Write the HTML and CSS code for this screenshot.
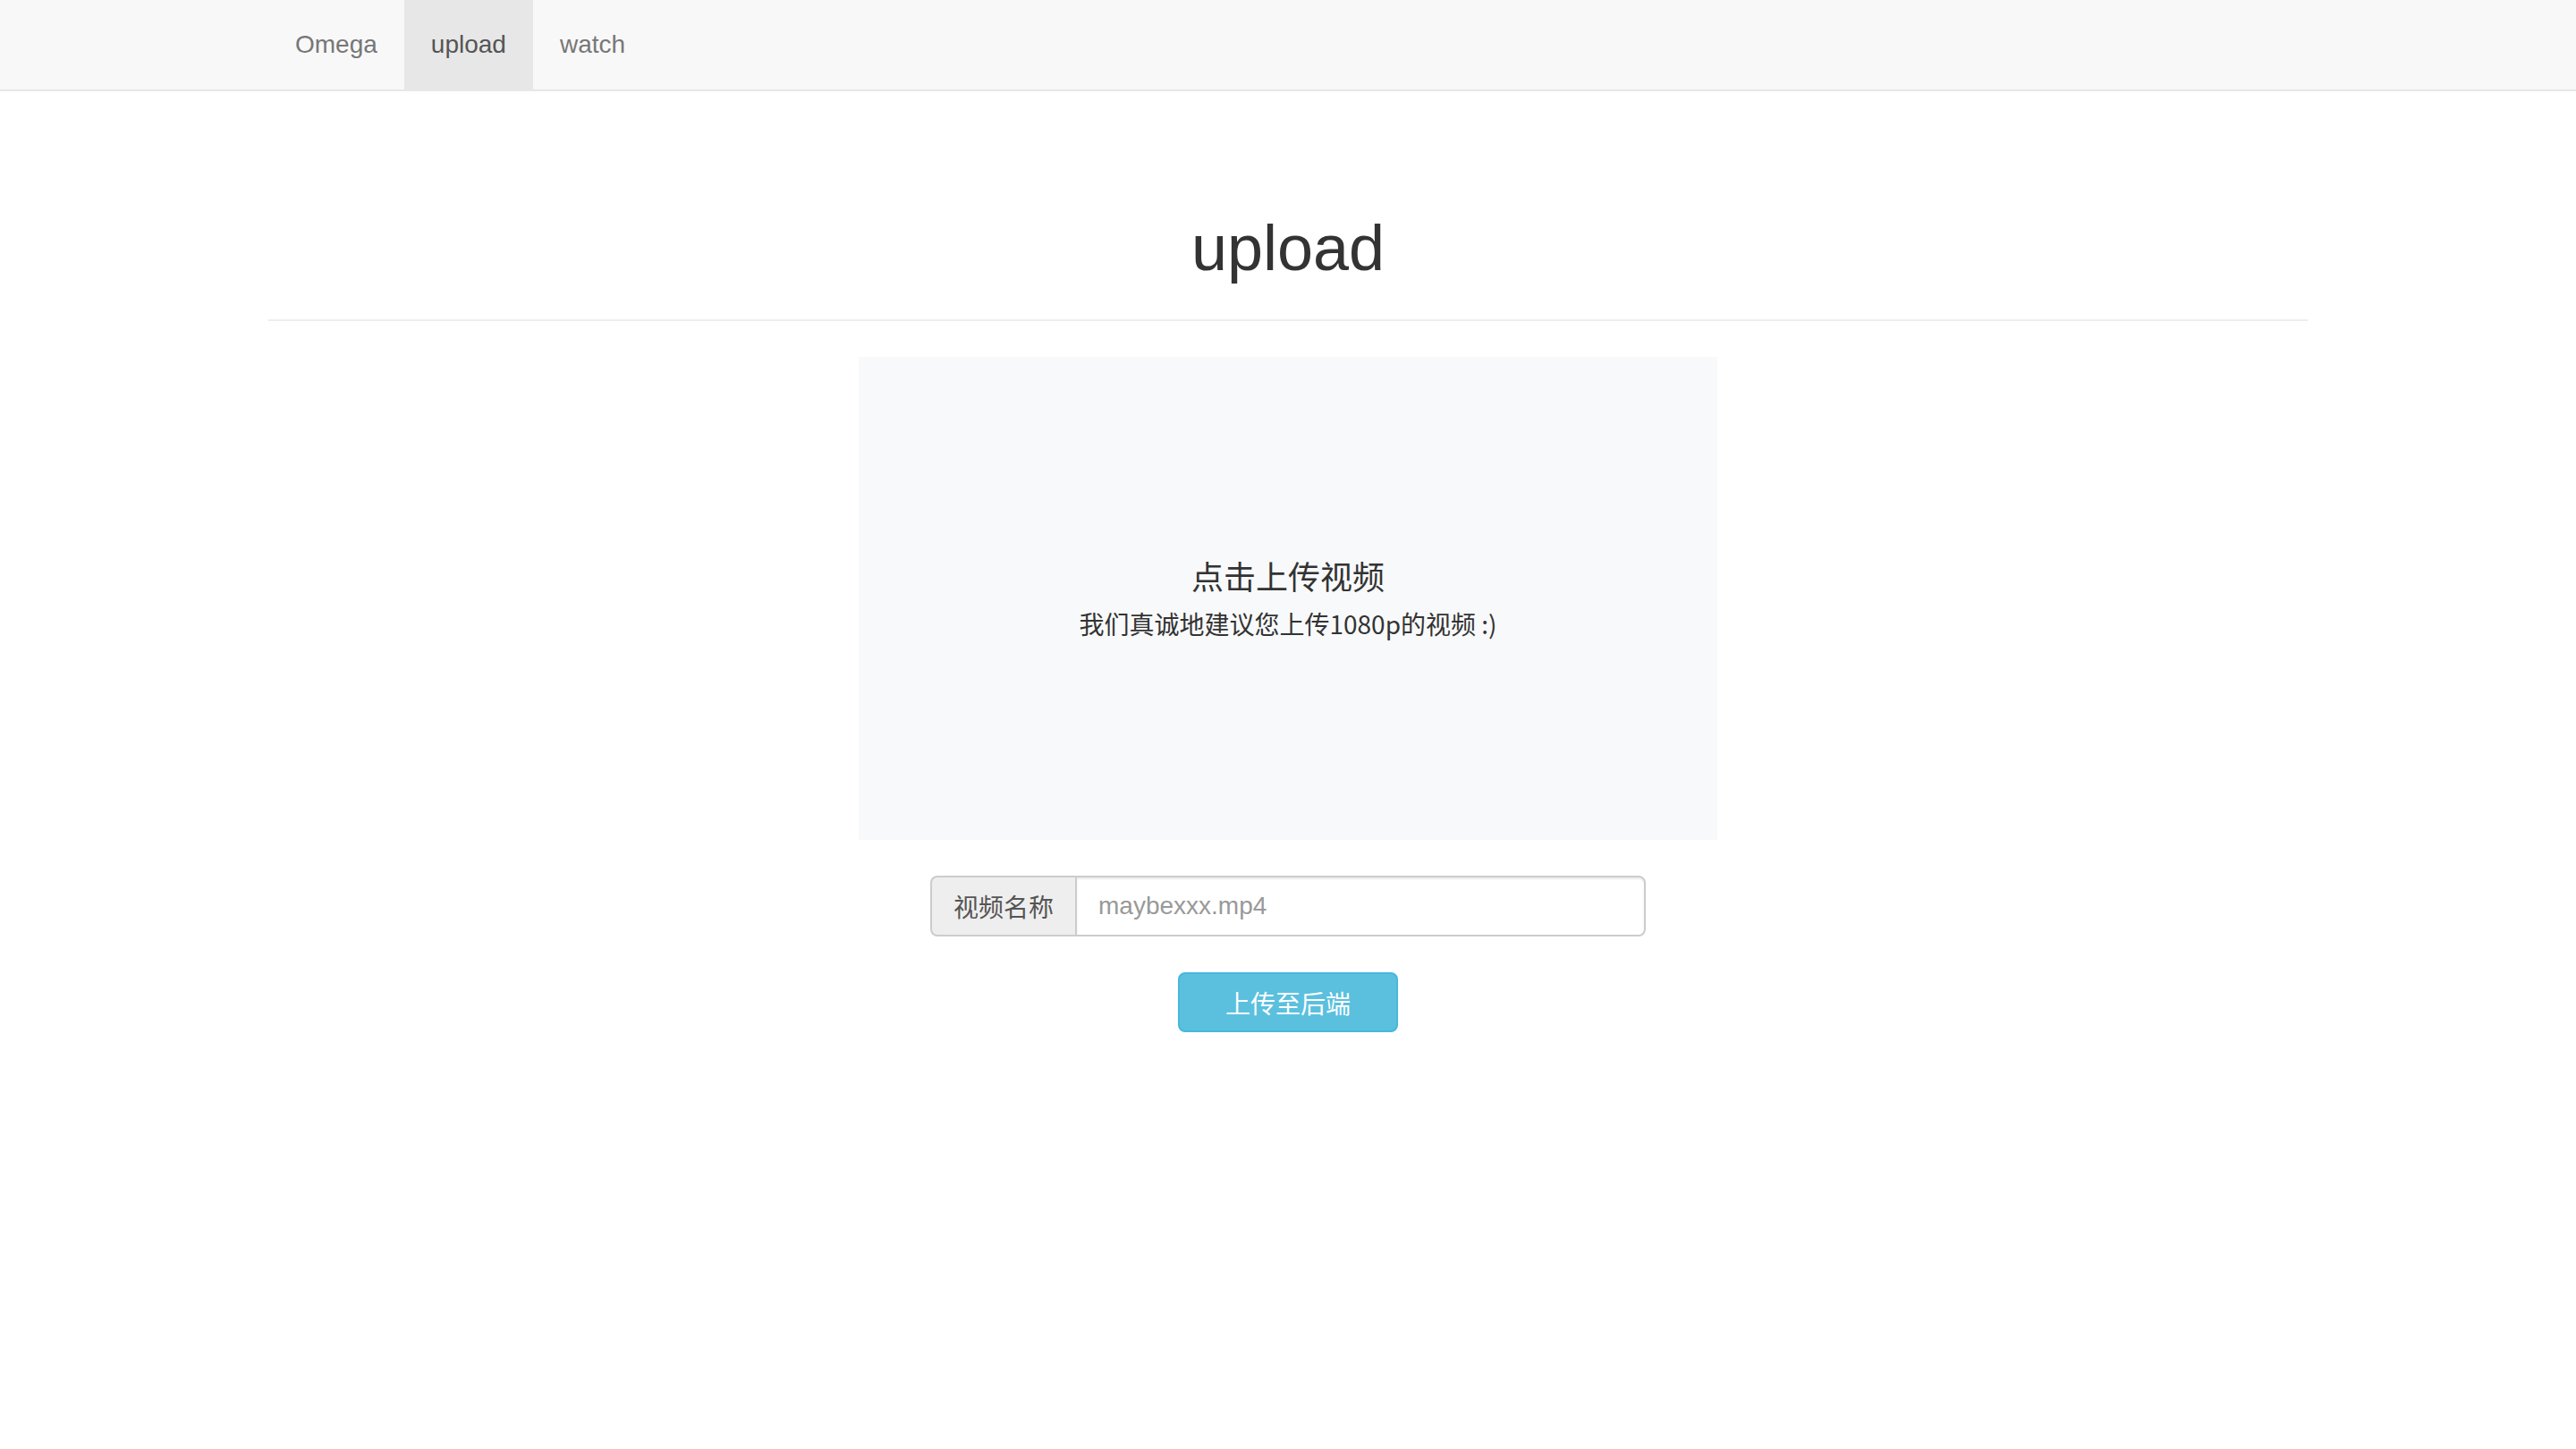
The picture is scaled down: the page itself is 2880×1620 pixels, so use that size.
FILE: index.html
```html
<!DOCTYPE html>
<html lang="zh-CN">
<head>
<meta charset="utf-8">
<title>upload</title>
<link rel="stylesheet" href="styles.css">
</head>
<body>
<nav class="navbar">
  <div class="nav-inner">
    <a class="nav-link" href="#">Omega</a>
    <a class="nav-link active" href="#">upload</a>
    <a class="nav-link" href="#">watch</a>
  </div>
</nav>
<main class="container">
  <div class="page-header">
    <h1 class="title">upload</h1>
  </div>
  <div class="upload-box">
    <div class="upload-title">点击上传视频</div>
    <div class="upload-hint">我们真诚地建议您上传1080p的视频 :)</div>
  </div>
  <div class="input-group">
    <span class="addon">视频名称</span>
    <input class="field" type="text" placeholder="maybexxx.mp4">
  </div>
  <div class="actions">
    <button class="btn-info" type="button">上传至后端</button>
  </div>
</main>
</body>
</html>
```
FILE: styles.css
```css
* { box-sizing: border-box; }
html, body { margin: 0; padding: 0; }
body {
  background: #fff;
  color: #333;
  font-family: "Liberation Sans", "Noto Sans CJK SC", sans-serif;
  font-size: 28px;
  line-height: 40px;
}
.navbar {
  height: 102px;
  background: #f8f8f8;
  border-bottom: 2px solid #e7e7e7;
}
.nav-inner {
  width: 2280px;
  margin: 0 auto;
  display: flex;
  height: 100px;
}
.nav-link {
  display: block;
  padding: 30px 30px;
  line-height: 40px;
  color: #777;
  text-decoration: none;
}
.nav-link.active {
  background: #e7e7e7;
  color: #555;
}
.container {
  width: 2280px;
  margin: 0 auto;
  display: flex;
  flex-direction: column;
  align-items: center;
}
.page-header {
  align-self: stretch;
  margin: 136px 0 40px;
  padding-bottom: 20px;
  border-bottom: 2px solid #eee;
}
.title {
  margin: 0 0 20px;
  font-size: 72px;
  line-height: 79.2px;
  font-weight: 500;
  text-align: center;
  color: #333;
}
.upload-box {
  width: 960px;
  height: 540px;
  background: #f8f9fa;
  display: flex;
  flex-direction: column;
  align-items: center;
  justify-content: center;
  padding-top: 6px;
  font-family: "Noto Sans CJK SC", "Noto Sans", sans-serif;
  color: #333;
}
.upload-title {
  font-size: 36px;
  line-height: 50px;
}
.upload-hint {
  font-size: 28px;
  line-height: 58px;
}
.input-group {
  margin-top: 40px;
  width: 800px;
  height: 68px;
  display: flex;
}
.addon {
  display: flex;
  align-items: center;
  padding: 0 24px;
  background: #eee;
  color: #555;
  border: 2px solid #ccc;
  border-right: 0;
  border-radius: 8px 0 0 8px;
  font-family: "Noto Sans CJK SC", sans-serif;
  font-size: 28px;
  white-space: nowrap;
}
.field {
  flex: 1;
  min-width: 0;
  height: 68px;
  padding: 0 24px;
  border: 2px solid #ccc;
  border-radius: 0 8px 8px 0;
  font-family: "Liberation Sans", sans-serif;
  font-size: 28px;
  color: #555;
  background: #fff;
  box-shadow: inset 0 2px 2px rgba(0,0,0,.075);
  outline: none;
}
.field::placeholder { color: #999; }
.actions {
  margin-top: 40px;
}
.btn-info {
  width: 246px;
  height: 67px;
  background: #5bc0de;
  border: 2px solid #46b8da;
  border-radius: 8px;
  color: #fff;
  font-family: "Noto Sans CJK SC", sans-serif;
  font-size: 28px;
  padding: 0;
  cursor: pointer;
}
```
